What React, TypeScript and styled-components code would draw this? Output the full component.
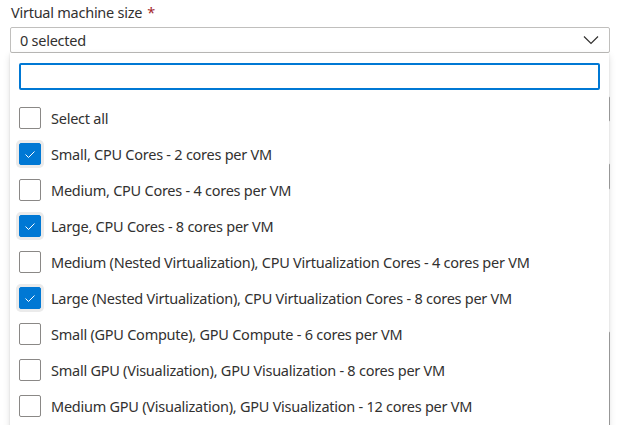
import React from "react";
import styled, { createGlobalStyle } from "styled-components";

const Global = createGlobalStyle`
  html, body { margin: 0; padding: 0; background: #ffffff; }
  body { font-family: "Segoe UI", "Noto Sans", sans-serif; color: #323130; }
`;

const Page = styled.div`
  position: relative;
  width: 624px;
  height: 425px;
  overflow: hidden;
  padding-left: 10px;
  box-sizing: border-box;
  font-size: 14.5px;
  letter-spacing: -0.25px;
`;

const Label = styled.div`
  height: 27px;
  line-height: 27px;
  padding-left: 1px;
  margin-top: -1px;
  color: #323130;
`;

const Required = styled.span`
  color: #a4262c;
  margin-left: 5px;
`;

const SelectBox = styled.div`
  width: 600px;
  height: 26px;
  box-sizing: border-box;
  border: 1px solid #c0bfbd;
  border-radius: 2px;
  display: flex;
  align-items: center;
  justify-content: space-between;
  padding: 0 10px 0 9px;
  margin-top: 1px;
`;

const Field = styled.div<{ $top: number; $h: number }>`
  width: 600px;
  height: ${(p) => p.$h}px;
  margin-top: ${(p) => p.$top}px;
  box-sizing: border-box;
  border: 1px solid #a6a6a6;
  border-radius: 2px;
`;

const Panel = styled.div`
  position: absolute;
  left: 10px;
  top: 53px;
  width: 599px;
  height: 400px;
  background: #ffffff;
  box-shadow: 0 3px 7px rgba(0, 0, 0, 0.13), 0 0 2px rgba(0, 0, 0, 0.1);
  padding: 10px 9px 0 9px;
  box-sizing: border-box;
  display: flex;
  flex-direction: column;
`;

const Search = styled.div`
  height: 27px;
  box-sizing: border-box;
  border: 2px solid #0078d4;
  border-radius: 2px;
  width: 581px;
`;

const List = styled.div`
  margin-top: 10px;
  display: flex;
  flex-direction: column;
`;

const Row = styled.div`
  height: 36px;
  display: flex;
  align-items: center;
  gap: 10px;
  color: #323130;
`;

const Box = styled.div<{ $checked: boolean }>`
  width: 22px;
  height: 22px;
  box-sizing: border-box;
  border-radius: 2px;
  border: 1px solid ${(p) => (p.$checked ? "#0078d4" : "#8a8886")};
  background: ${(p) => (p.$checked ? "#0078d4" : "#ffffff")};
  box-shadow: ${(p) => (p.$checked ? "0 0 0 3px #ebebeb" : "none")};
  display: flex;
  align-items: center;
  justify-content: center;
  flex: none;
`;

const Chevron = () => (
  <svg width="16" height="10" viewBox="0 0 16 10">
    <polyline points="1,1.5 8,8.5 15,1.5" fill="none" stroke="#323130" strokeWidth="1.2" />
  </svg>
);

const Check = () => (
  <svg width="14" height="12" viewBox="0 0 14 12">
    <polyline points="2.5,6.5 5.5,9.5 11.5,3.5" fill="none" stroke="#ffffff" strokeWidth="1" />
  </svg>
);

const items: [string, boolean][] = [
  ["Select all", false],
  ["Small, CPU Cores - 2 cores per VM", true],
  ["Medium, CPU Cores - 4 cores per VM", false],
  ["Large, CPU Cores - 8 cores per VM", true],
  ["Medium (Nested Virtualization), CPU Virtualization Cores - 4 cores per VM", false],
  ["Large (Nested Virtualization), CPU Virtualization Cores - 8 cores per VM", true],
  ["Small (GPU Compute), GPU Compute - 6 cores per VM", false],
  ["Small GPU (Visualization), GPU Visualization - 8 cores per VM", false],
  ["Medium GPU (Visualization), GPU Visualization - 12 cores per VM", false],
];

export default function App() {
  return (
    <Page>
      <Global />
      <Label>
        Virtual machine size<Required>*</Required>
      </Label>
      <SelectBox>
        <span>0 selected</span>
        <Chevron />
      </SelectBox>
      <Field $top={43} $h={26} />
      <Field $top={41} $h={27} />
      <Field $top={141} $h={120} />
      <Panel>
        <Search />
        <List>
          {items.map(([t, c]) => (
            <Row key={t}>
              <Box $checked={c}>{c && <Check />}</Box>
              <span>{t}</span>
            </Row>
          ))}
        </List>
      </Panel>
    </Page>
  );
}
